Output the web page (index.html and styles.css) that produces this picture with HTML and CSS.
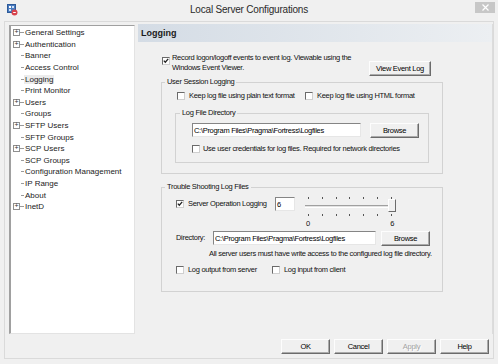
FILE: index.html
```html
<!DOCTYPE html>
<html lang="en">
<head>
    <meta charset="UTF-8">
    <title>Local Server Configurations</title>
    <link rel="stylesheet" href="styles.css">
</head>
<body>
    <div class="window">
        <div class="titlebar">
            <span class="app-icon">
                <svg width="11" height="12" viewBox="0 0 11 12">
                    <rect x="0.5" y="0.5" width="8" height="8" fill="#4a7cc0" stroke="#2d5a99"/>
                    <rect x="2" y="2" width="2" height="2" fill="#fff"/>
                    <rect x="5" y="2" width="2" height="2" fill="#cfe0f5"/>
                    <rect x="2" y="5" width="2" height="2" fill="#cfe0f5"/>
                    <circle cx="7.5" cy="8.5" r="3" fill="#d8424c"/>
                    <path d="M6.2 8.5h2.6" stroke="#fff" stroke-width="1"/>
                </svg>
            </span>
            <span class="title">Local Server Configurations</span>
            <span class="close-btn">
                <svg width="7" height="7" viewBox="0 0 7 7">
                    <path d="M0.5 0.5L6.5 6.5M6.5 0.5L0.5 6.5" stroke="#fff" stroke-width="1.2"/>
                </svg>
            </span>
        </div>

        <div class="frame">
            <div class="main">
                <ul class="tree">
                    <li class="node"><span class="twig plus"></span>General Settings</li>
                    <li class="node"><span class="twig plus"></span>Authentication</li>
                    <li class="node"><span class="twig"></span>Banner</li>
                    <li class="node"><span class="twig"></span>Access Control</li>
                    <li class="node"><span class="twig"></span><span class="selected">Logging</span></li>
                    <li class="node"><span class="twig"></span>Print Monitor</li>
                    <li class="node"><span class="twig plus"></span>Users</li>
                    <li class="node"><span class="twig"></span>Groups</li>
                    <li class="node"><span class="twig plus"></span>SFTP Users</li>
                    <li class="node"><span class="twig"></span>SFTP Groups</li>
                    <li class="node"><span class="twig plus"></span>SCP Users</li>
                    <li class="node"><span class="twig"></span>SCP Groups</li>
                    <li class="node"><span class="twig"></span>Configuration Management</li>
                    <li class="node"><span class="twig"></span>IP Range</li>
                    <li class="node"><span class="twig"></span>About</li>
                    <li class="node"><span class="twig plus"></span>InetD</li>
                </ul>

                <div class="panel">
                    <div class="panel-header">Logging</div>

                    <div class="record-row">
                        <span class="cb checked"></span>
                        <span class="record-text">Record logon/logoff events to event log. Viewable using the<br>Windows Event Viewer.</span>
                        <button class="btn btn-wide">View Event Log</button>
                    </div>

                    <fieldset class="group">
                        <legend>User Session Logging</legend>
                        <div class="check-row cols-session">
                            <label class="check"><span class="cb"></span>Keep log file using plain text format</label>
                            <label class="check"><span class="cb"></span>Keep log file using HTML format</label>
                        </div>

                        <fieldset class="group inner">
                            <legend>Log File Directory</legend>
                            <div class="dir-row">
                                <input class="field field-dir" type="text" value="C:\Program Files\Pragma\Fortress\Logfiles">
                                <button class="btn">Browse</button>
                            </div>
                            <div class="check-row cred-row">
                                <label class="check"><span class="cb"></span>Use user credentials for log files. Required for network directories</label>
                            </div>
                        </fieldset>
                    </fieldset>

                    <fieldset class="group trouble">
                        <legend>Trouble Shooting Log Files</legend>
                        <div class="server-row">
                            <label class="check server-check"><span class="cb checked"></span>Server Operation Logging</label>
                            <input class="field field-num" type="text" value="6">
                            <div class="slider">
                                <div class="ticks"><i></i><i></i><i></i><i></i><i></i><i></i><i></i></div>
                                <div class="track"></div>
                                <div class="ticks"><i></i><i></i><i></i><i></i><i></i><i></i><i></i></div>
                                <div class="scale"><span>0</span><span>6</span></div>
                                <span class="thumb"></span>
                            </div>
                        </div>
                        <div class="dir-row trouble-dir">
                            <span class="dir-label">Directory:</span>
                            <input class="field field-dir2" type="text" value="C:\Program Files\Pragma\Fortress\Logfiles">
                            <button class="btn">Browse</button>
                        </div>
                        <p class="note">All server users must have write access to the configured log file directory.</p>
                        <div class="check-row cols-log">
                            <label class="check"><span class="cb"></span>Log output from server</label>
                            <label class="check"><span class="cb"></span>Log input from client</label>
                        </div>
                    </fieldset>
                </div>
            </div>

            <div class="actions">
                <button class="btn">OK</button>
                <button class="btn">Cancel</button>
                <button class="btn" disabled>Apply</button>
                <button class="btn">Help</button>
            </div>
        </div>
    </div>
</body>
</html>
```

FILE: styles.css
```css
body {
    margin: 0;
    background: #f0f0f0;
    font-family: 'Liberation Sans', Arial, sans-serif;
    font-size: 7.5px;
    letter-spacing: -0.3px;
    color: #111;
}
.window {
    width: 498px;
    height: 364px;
    overflow: hidden;
}
.titlebar {
    height: 21px;
    display: grid;
    grid-template-columns: 1fr auto 1fr;
    align-items: start;
}
.app-icon {
    margin: 4px 0 0 7px;
    height: 12px;
}
.title {
    font-size: 10px;
    letter-spacing: -0.2px;
    line-height: 20px;
    color: #2a2a2a;
}
.close-btn {
    justify-self: end;
    margin: 2px 3px 0 0;
    width: 20px;
    height: 11px;
    background: #c7c7c7;
    display: flex;
    align-items: center;
    justify-content: center;
}
.frame {
    box-sizing: border-box;
    margin: 0 4px;
    height: 338px;
    border: 1px solid #dadada;
    padding: 2px 0 4px 4px;
}
.main {
    display: flex;
    gap: 3px;
    height: 310px;
}

/* tree */
.tree {
    box-sizing: border-box;
    list-style: none;
    margin: 1px 0 0 0;
    padding: 1px 0 0 2px;
    width: 126px;
    height: 309px;
    background: #fff;
    border-top: 1px solid #a0a0a0;
    border-left: 2px solid #a0a0a0;
    border-right: 1px solid #e3e3e3;
    border-bottom: 1px solid #e3e3e3;
    font-size: 8px;
    letter-spacing: 0;
    color: #1b1b1b;
}
.node {
    height: 11.6px;
    display: flex;
    align-items: center;
    white-space: nowrap;
}
.twig {
    position: relative;
    width: 12px;
    height: 11px;
    flex: none;
}
.twig::after {
    content: '';
    position: absolute;
    left: 8px;
    top: 5px;
    width: 3px;
    border-top: 1px solid #9a9a9a;
}
.twig.plus::before {
    content: '+';
    position: absolute;
    left: 0;
    top: 2px;
    box-sizing: border-box;
    width: 7px;
    height: 7px;
    border: 1px solid #8f8f8f;
    font-size: 7px;
    line-height: 4px;
    text-align: center;
    color: #333;
}
.twig.plus::after {
    left: 7px;
    width: 4px;
}
.selected {
    background: #ececec;
    padding: 0 1px;
    margin-left: -1px;
}

/* right panel */
.panel {
    flex: 1;
    border-right: 1px solid #dcdcdc;
}
.panel-header {
    height: 18px;
    line-height: 18px;
    padding-left: 3px;
    font-size: 9px;
    font-weight: bold;
    letter-spacing: 0;
    color: #1a1a1a;
    background: linear-gradient(to right, #d4dce5, #eceff2);
}
.record-row {
    display: flex;
    align-items: flex-start;
    margin-top: 11px;
    padding-left: 24px;
    height: 23px;
}
.record-row .cb {
    margin-top: 4px;
}
.record-text {
    width: 197px;
    margin-left: 2px;
    line-height: 10px;
}
.btn {
    box-sizing: border-box;
    width: 49px;
    height: 15px;
    padding: 0;
    border: 1px solid;
    border-color: #fdfdfd #6b6b6b #6b6b6b #fdfdfd;
    box-shadow: inset -1px -1px 0 #aaa;
    background: #f0f0f0;
    font: inherit;
    letter-spacing: -0.3px;
    color: #000;
}
.btn:disabled {
    color: #a3a3a3;
    text-shadow: 1px 1px 0 #fff;
}
.btn-wide {
    width: 62px;
    margin-top: 8px;
}

/* checkboxes */
.cb {
    box-sizing: border-box;
    display: inline-block;
    width: 8px;
    height: 8px;
    flex: none;
    background: #fff;
    border: 1px solid;
    border-color: #6a6a6a #cfcfcf #cfcfcf #6a6a6a;
}
.cb.checked {
    background: #fff url("data:image/svg+xml,%3Csvg xmlns='http://www.w3.org/2000/svg' width='6' height='6'%3E%3Cpath d='M0.8 2.6L2.3 4.2L5.2 0.9' fill='none' stroke='%23222' stroke-width='1.3'/%3E%3C/svg%3E") center no-repeat;
}
.check {
    display: flex;
    align-items: center;
    gap: 4px;
    white-space: nowrap;
}
.check-row {
    display: grid;
    height: 10px;
    align-items: center;
    line-height: 10px;
}

/* group boxes */
.group {
    box-sizing: border-box;
    margin: 1px 0 0 23px;
    width: 282px;
    padding: 0 0 10px 0;
    border: 1px solid #d2d2d2;
    min-width: 0;
}
.group legend {
    padding: 0 2px;
    margin-left: 3px;
    line-height: 10px;
}
.cols-session {
    grid-template-columns: 128px auto;
    margin-top: 4px;
    padding-left: 15px;
}
.group.inner {
    margin: 7px 0 0 13px;
    width: 254px;
    padding-bottom: 8px;
}
.group.inner legend {
    margin-left: 4px;
}
.dir-row {
    display: flex;
    align-items: flex-start;
    margin-top: 5px;
    padding-left: 16px;
}
.field {
    box-sizing: border-box;
    height: 14px;
    margin: 0;
    padding: 0 1px;
    border: 1px solid;
    border-color: #858585 #e6e6e6 #e6e6e6 #858585;
    background: #fff;
    font: inherit;
    letter-spacing: -0.3px;
    color: #000;
}
.field-dir {
    width: 169px;
    margin-right: 9px;
}
.cred-row {
    margin-top: 6px;
    padding-left: 16px;
}
.cred-row .check {
    gap: 3px;
}

/* trouble shooting */
.group.trouble {
    margin-top: 8px;
    padding-bottom: 16px;
}
.server-row {
    display: flex;
    align-items: flex-start;
    margin-top: 4px;
    padding-left: 14px;
}
.server-check {
    width: 99px;
    margin-top: 3px;
    line-height: 10px;
}
.field-num {
    width: 20px;
    margin-top: 1px;
}
.slider {
    position: relative;
    width: 96px;
    margin-left: 7px;
    display: flex;
    flex-direction: column;
}
.ticks {
    display: flex;
    justify-content: space-between;
    padding: 0 6px;
    height: 2px;
    margin-top: 1px;
}
.ticks i {
    width: 1px;
    background: #555;
}
.ticks + .track {
    margin-top: 6px;
}
.track {
    height: 3px;
    margin: 0 2px 0 3px;
    box-sizing: border-box;
    border-top: 1px solid #a0a0a0;
    border-bottom: 1px solid #fff;
    background: #e3e3e3;
}
.track + .ticks {
    margin-top: 6px;
}
.scale {
    display: flex;
    justify-content: space-between;
    padding: 0 4px;
    margin-top: 3px;
    line-height: 9px;
}
.thumb {
    position: absolute;
    left: 86px;
    top: 3px;
    box-sizing: border-box;
    width: 8px;
    height: 13px;
    border: 1px solid;
    border-color: #fff #6b6b6b #6b6b6b #fff;
    background: #f0f0f0;
}
.trouble-dir {
    margin-top: 3px;
    padding-left: 14px;
}
.dir-label {
    width: 37px;
    line-height: 14px;
}
.field-dir2 {
    width: 163px;
    margin-right: 5px;
}
.note {
    margin: 3px 0 0 0;
    padding-left: 47px;
    line-height: 10px;
    white-space: nowrap;
}
.cols-log {
    grid-template-columns: 96px auto;
    margin-top: 6px;
    padding-left: 14px;
}

/* bottom buttons */
.actions {
    display: flex;
    justify-content: flex-end;
    gap: 4px;
    margin-top: 5px;
    padding-right: 4px;
}
```
